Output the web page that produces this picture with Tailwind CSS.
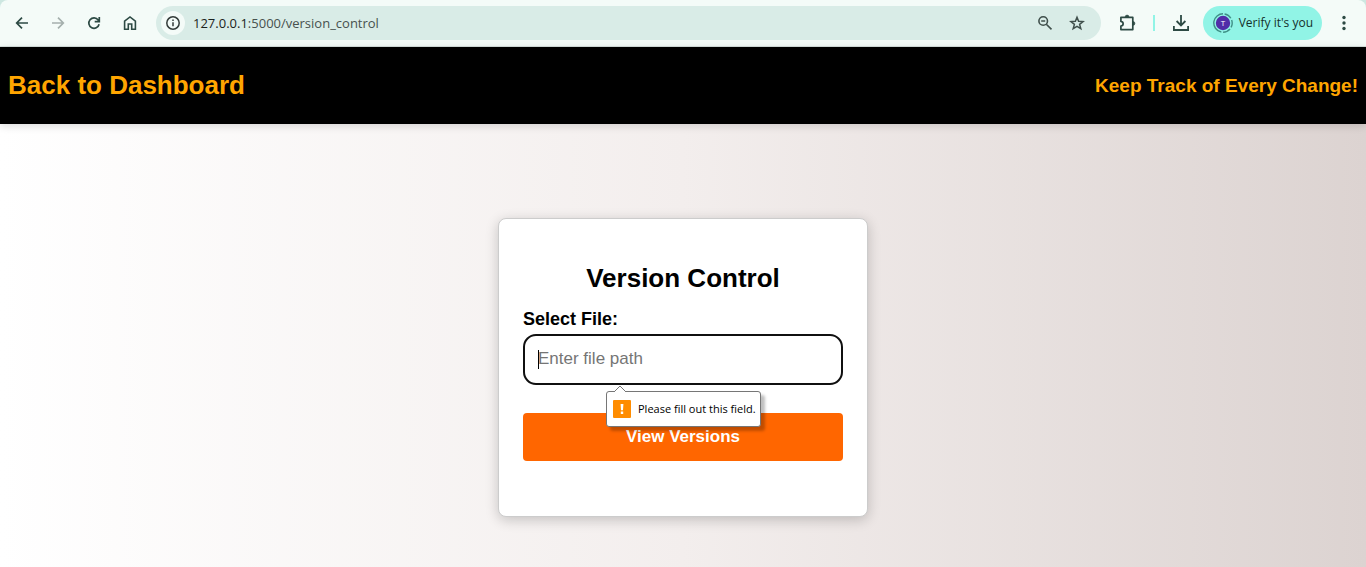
<!DOCTYPE html>
<html lang="en">
<head>
<meta charset="utf-8">
<meta name="viewport" content="width=device-width, initial-scale=1">
<title>Version Control</title>
<script src="https://cdn.jsdelivr.net/npm/@tailwindcss/browser@4"></script>
</head>
<body class="flex min-h-screen flex-col bg-[#cde7e1] font-['Liberation_Sans',Arial,sans-serif] text-black">

<!-- Browser toolbar -->
<nav aria-label="Browser toolbar" class="flex h-[47px] shrink-0 items-center rounded-t-lg border-b border-[#d5dfdc] bg-[#f4fbf8] pr-3 pl-3 font-['Open_Sans','Noto_Sans',sans-serif] text-[#2d4a44]">
  <div class="flex gap-4 pr-4">
    <button type="button" aria-label="Back" class="grid size-5 place-items-center">
      <svg class="size-4" viewBox="0 0 16 16" fill="none" stroke="currentColor" stroke-width="1.7"><path d="M14 8H3M8 2.7 2.7 8 8 13.3"/></svg>
    </button>
    <button type="button" aria-label="Forward" disabled class="grid size-5 place-items-center text-[#a5b0ad]">
      <svg class="size-4" viewBox="0 0 16 16" fill="none" stroke="currentColor" stroke-width="1.7"><path d="M2 8h11M8 2.7 13.3 8 8 13.3"/></svg>
    </button>
    <button type="button" aria-label="Reload" class="grid size-5 place-items-center">
      <svg class="size-4" viewBox="0 0 16 16" fill="none" stroke="currentColor" stroke-width="1.7"><path d="M13.1 9.3A5.2 5.2 0 1 1 12.2 5L13.3 6.4M13.3 2v4.6H8.7"/></svg>
    </button>
    <button type="button" aria-label="Home" class="grid size-5 place-items-center">
      <svg class="size-4" viewBox="0 0 16 16" fill="none" stroke="currentColor" stroke-width="1.6"><path d="M2.6 6.2 8 1.9l5.4 4.3v8.1H9.7V9H6.3v5.3H2.6z"/></svg>
    </button>
  </div>
  <div class="flex h-[34px] min-w-0 flex-1 items-center rounded-full bg-[#d9ece7] pr-4 pl-[5px]">
    <button type="button" aria-label="Site information" class="grid size-6 shrink-0 place-items-center rounded-full bg-[#f4fbf8] text-[#333b39]">
      <svg class="size-4" viewBox="0 0 16 16" fill="none" stroke="currentColor" stroke-width="1.5"><circle cx="8" cy="8" r="6.2"/><path d="M8 7.2v4M8 4.5v1.6"/></svg>
    </button>
    <div class="min-w-0 flex-1 pl-2 text-[13px] leading-5 text-[#47514e]"><span class="text-[#1b2220]">127.0.0.1</span>:5000/version_control</div>
    <div class="flex gap-4 text-[#40504c]">
      <button type="button" aria-label="Zoom" class="grid size-4 place-items-center">
        <svg class="size-4" viewBox="0 0 16 16" fill="none" stroke="currentColor" stroke-width="1.6"><circle cx="6.2" cy="6" r="4.3"/><path d="m9.3 9.2 5.2 5.2M4.2 6h4"/></svg>
      </button>
      <button type="button" aria-label="Bookmark this page" class="grid size-4 place-items-center">
        <svg class="size-4" viewBox="0 0 16 16" fill="none" stroke="currentColor" stroke-width="1.5"><path d="m8 2.2 1.6 4.1 4.5.3-3.5 2.8 1.2 4.3L8 11.3l-3.8 2.4 1.2-4.3-3.5-2.8 4.5-.3z"/></svg>
      </button>
    </div>
  </div>
  <div class="flex items-center pl-4">
    <button type="button" aria-label="Extensions" class="grid size-5 place-items-center">
      <svg class="size-5" viewBox="0 0 20 20" fill="none" stroke="currentColor" stroke-width="1.7" stroke-linejoin="round"><path d="M3.9 4.3h11.9v12.3H3.9v-3.4c3-.6 3-4.2 0-4.8z"/><path d="M8.200 4a1.900 1.900 0 0 1 3.800 0zM16 8.500a1.900 1.900 0 0 1 0 3.800z" fill="currentColor" stroke-width=".6"/></svg>
    </button>
    <span class="mx-4 h-4 w-0.5 bg-[#91f4e6]"></span>
    <button type="button" aria-label="Downloads" class="grid size-5 place-items-center">
      <svg class="size-5" viewBox="0 0 20 20" fill="none" stroke="currentColor" stroke-width="1.8"><path d="M10 2v10M5.6 8 10 12.4 14.4 8M2.9 13v4h14.2v-4"/></svg>
    </button>
    <button type="button" class="ml-3 flex h-[34px] items-center gap-1.5 rounded-full bg-[#91f4e6] pr-[9px] pl-2.5 text-xs text-[#14302b]">
      <svg class="size-5" viewBox="0 0 20 20" aria-hidden="true"><circle cx="10" cy="10" r="9.2" fill="none" stroke="#3f8f86" stroke-width="1.4" stroke-dasharray="7.8 1.8 7.8 1.8 7.8 1.8 27 1.8" transform="rotate(-80 10 10)"/><circle cx="10" cy="10" r="7.2" fill="#512da8"/><text x="10" y="13" text-anchor="middle" font-size="8" fill="#fff">T</text></svg>
      <span>Verify it's you</span>
    </button>
    <button type="button" aria-label="Browser menu" class="ml-3 grid size-5 place-items-center">
      <svg class="size-5" viewBox="0 0 20 20" fill="currentColor"><circle cx="10" cy="4.5" r="1.7"/><circle cx="10" cy="10" r="1.7"/><circle cx="10" cy="15.5" r="1.7"/></svg>
    </button>
  </div>
</nav>

<header class="relative flex items-center justify-between bg-black px-2 py-[22px] font-bold text-[#ffa500] shadow-[0_2px_8px_rgba(0,0,0,0.14)]">
  <a href="#" class="text-[26px] leading-[33px]">Back to Dashboard</a>
  <p class="text-[19px] leading-[33px]">Keep Track of Every Change!</p>
</header>

<main class="flex flex-1 items-start justify-center bg-linear-to-r/srgb from-white via-[#f3eeed] to-[#dcd3d1] px-4 pt-[94px] pb-12">
  <form class="w-full max-w-[370px] rounded-lg border border-[#ccc] bg-white px-6 pt-11 pb-[55px] shadow-[0_3px_13px_rgba(0,0,0,0.2)]">
    <h1 class="text-center text-[26px] leading-[30px] font-bold">Version Control</h1>
    <label for="file-path" class="mt-4 block text-[18px] leading-5 font-bold">Select File:</label>
    <div class="relative mt-[5px]">
      <input id="file-path" type="text" placeholder="Enter file path" class="block h-[51px] w-full rounded-[13px] border-2 border-[#101010] bg-white px-[13px] pb-0.5 text-[17px] outline-none placeholder:text-[#757575]">
      <span class="absolute top-4 left-[15px] h-[19px] w-px bg-black"></span>
      <div role="alert" class="absolute top-[57px] left-[83px] flex h-9 items-center gap-[7px] rounded-[3px] border border-[#767676] bg-white pr-1 pl-1.5 font-['Open_Sans','Noto_Sans',sans-serif] text-[11px] whitespace-nowrap shadow-[4px_4px_3px_rgba(0,0,0,0.25)]">
        <svg class="absolute -top-[7px] left-[6px] h-[7px] w-[14px]" viewBox="0 0 14 7"><path d="M1 7 7 1l6 6" fill="#fff" stroke="#767676"/></svg>
        <svg class="size-[18px]" viewBox="0 0 18 18" aria-hidden="true"><rect width="18" height="18" rx="1" fill="#ff8c00"/><path d="M7.6 4h2.8l-.4 6.2H8zM7.8 11.6h2.4V14H7.8z" fill="#fff"/></svg>
        <span>Please fill out this field.</span>
      </div>
    </div>
    <button type="submit" class="mt-7 block h-12 w-full rounded bg-[#ff6600] text-[17px] font-bold text-white">View Versions</button>
  </form>
</main>
</body>
</html>
